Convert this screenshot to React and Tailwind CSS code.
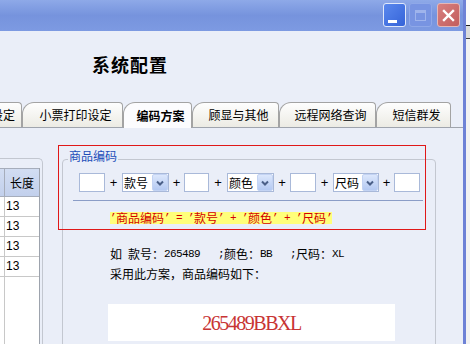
import React from 'react';

const tabs = [
    { label: '基本设定', w: 'w-[80px] -ml-[58px]', pad: 'justify-end pr-[6px]' },
    { label: '小票打印设定', w: 'w-[101px]', pad: 'justify-center pl-[6px]' },
    { label: '编码方案', w: 'w-[69px]', pad: 'justify-center pl-[6px]', active: true },
    { label: '顾显与其他', w: 'w-[87px]', pad: 'justify-center pl-[6px]' },
    { label: '远程网络查询', w: 'w-[97px]', pad: 'justify-center pl-[6px]' },
    { label: '短信群发', w: 'w-[75px]', pad: 'justify-center pl-[6px]' },
];

// ASCII runs are drawn half-width (6px), like the old bitmap font
const Mix = ({ text }) =>
    text.split(/([\u0000-\u00ff\u2019]+)/).filter(Boolean).map((s, i) =>
        /^[\u0000-\u00ff\u2019]+$/.test(s) ? (
            <span key={i} className="whitespace-pre font-['Liberation_Mono'] text-[11px] tracking-[-0.6px]">{s}</span>
        ) : (
            <span key={i}>{s}</span>
        )
    );

const Box = ({ w }) => (
    <div className={`${w} h-[19px] bg-white border border-[#a9b9d9]`} />
);

const Plus = ({ w }) => (
    <div className={`${w} text-center text-[13px] leading-[19px] font-['Liberation_Sans'] text-black`}>+</div>
);

const Select = ({ label, w }) => (
    <div className={`${w} h-[19px] bg-white border border-[#a9b9d9] flex items-center`}>
        <span className="flex-1 pl-[1px] text-[12px] leading-[17px] text-black">{label}</span>
        <div className="w-[16px] h-[17px] rounded-[2px] bg-gradient-to-b from-[#dce7fc] to-[#b4c9f2] border border-[#c3d3f3] flex items-center justify-center">
            <svg width="10" height="10" viewBox="0 0 10 10">
                <polyline points="2,3.5 5,6.5 8,3.5" fill="none" stroke="#4a5f88" strokeWidth="2" />
            </svg>
        </div>
    </div>
);

export default function App() {
    return (
        <div className="w-[470px] h-[344px] overflow-hidden relative flex bg-[#eaeef8] font-['Noto_Sans_CJK_SC',sans-serif]">
            <div className="w-[463px] flex flex-col">
                {/* title bar */}
                <div className="h-[31px] shrink-0 bg-gradient-to-b from-[#8ea9e8] via-[#7693dd] to-[#7d9ae2] flex justify-end items-start pt-[3px] pr-[3px]">
                    <div className="w-[23px] h-[24px] rounded-[3px] border border-[#dfe8fb] bg-gradient-to-br from-[#5a88ee] to-[#3563d8] relative">
                        <div className="absolute left-[4px] bottom-[3px] w-[9px] h-[3px] bg-white" />
                    </div>
                    <div className="w-[23px] h-[24px] ml-[3px] rounded-[3px] border border-[#8fa8e8] bg-[#7894e2] flex items-center justify-center">
                        <div className="w-[11px] h-[11px] border border-[#9fb4ec] border-t-[3px]" />
                    </div>
                    <div className="w-[23px] h-[24px] ml-[5px] rounded-[3px] border border-[#e3b8b8] bg-gradient-to-br from-[#d88080] to-[#c25d5d] flex items-center justify-center">
                        <svg width="13" height="13" viewBox="0 0 13 13">
                            <path d="M2 2 L11 11 M11 2 L2 11" stroke="white" strokeWidth="2.4" strokeLinecap="square" />
                        </svg>
                    </div>
                </div>

                {/* header */}
                <div className="h-[71px] shrink-0 pl-[92px] pt-[22px]">
                    <span className="text-[18px] leading-[18px] font-bold text-black tracking-[1px]">系统配置</span>
                </div>

                {/* tabs */}
                <div className="h-[26px] shrink-0 flex items-end border-b border-[#9fa4ad]">
                    {tabs.map((t) => (
                        <div
                            key={t.label}
                            className={`${t.w} ${t.pad} flex items-center text-[12px] text-black rounded-tl-[12px] rounded-tr-[4px] border border-b-0 border-[#a3a3a3] ${
                                t.active
                                    ? 'h-[26px] -mb-px bg-[#fcfcfe] font-bold'
                                    : 'h-[25px] bg-gradient-to-b from-[#fefefe] to-[#ecebe4]'
                            }`}
                        >
                            {t.label}
                        </div>
                    ))}
                </div>

                {/* content */}
                <div className="flex-1 flex">
                    <div className="w-[43px] mt-[30px] border-t border-r border-[#c3c7d0] rounded-tr-[5px] flex flex-col">
                        <div className="mt-[9px] w-[40px] flex-1 border-r border-[#9da3ad] bg-white flex flex-col text-[12px]">
                            <div className="h-[29px] flex border-y border-[#a6adbb] bg-gradient-to-b from-[#d2ddf2] to-[#c2d0ec]">
                                <div className="w-[5px] border-r border-[#a6adbb]" />
                                <div className="flex-1 flex items-center justify-center text-black">长度</div>
                            </div>
                            {[0, 1, 2, 3].map((i) => (
                                <div key={i} className="h-[20px] flex border-b border-[#c8c8c8]">
                                    <div className="w-[5px] border-r border-[#c8c8c8]" />
                                    <div className="flex-1 pl-[1px] leading-[19px] font-['Liberation_Sans'] text-black">13</div>
                                </div>
                            ))}
                            <div className="flex-1 flex">
                                <div className="w-[5px] border-r border-[#c8c8c8]" />
                            </div>
                        </div>
                    </div>

                    <div className="ml-[19px] mt-[31px] w-[374px] h-[220px] relative border border-[#c3c7d0] rounded-[4px] pl-[16px] pt-[13px] flex flex-col items-start">
                        <div className="absolute left-[5px] -top-[10px] px-[1px] bg-[#eaeef8] text-[12px] leading-[12px] text-[#1d4db8]">商品编码</div>
                        <div className="flex items-center">
                            <Box w="w-[26px]" />
                            <Plus w="w-[17px]" />
                            <Select label="款号" w="w-[47px]" />
                            <Plus w="w-[15px]" />
                            <Box w="w-[25px]" />
                            <Plus w="w-[18px]" />
                            <Select label="颜色" w="w-[47px]" />
                            <Plus w="w-[16px]" />
                            <Box w="w-[26px]" />
                            <Plus w="w-[17px]" />
                            <Select label="尺码" w="w-[46px]" />
                            <Plus w="w-[15px]" />
                            <Box w="w-[26px]" />
                        </div>
                        <div className="mt-[8px] -ml-[6px] w-[350px] h-px bg-[#8b9dc7]" />
                        <div className="mt-[11px] ml-[31px] h-[12px] flex items-center bg-[#ffff7a] text-[#d40000] text-[12px] leading-[12px]">
                            <Mix text="’商品编码’ = ’款号’ + ’颜色’ + ’尺码’" />
                        </div>
                        <div className="mt-[24px] ml-[31px] h-[12px] flex items-center text-[12px] leading-[12px] text-black">
                            <Mix text="如 款号：265489   ;颜色：BB   ;尺码：XL" />
                        </div>
                        <div className="mt-[8px] ml-[31px] h-[12px] flex items-center text-[12px] leading-[12px] text-black">采用此方案，商品编码如下：</div>
                        <div className="mt-[24px] ml-[29px] w-[287px] h-[37px] bg-white flex items-center justify-center">
                            <span className="font-['Liberation_Serif',serif] text-[20px] leading-[20px] tracking-[-1.5px] text-[#c83434]">265489BBXL</span>
                        </div>
                    </div>
                </div>
            </div>

            {/* window frame edge */}
            <div className="w-[3px] bg-[#6e82d6]" />
            <div className="w-[4px] flex flex-col bg-[#f2f2f2]">
                <div className="h-[25px] bg-[#fafafa]" />
                <div className="h-px bg-[#202020]" />
                <div className="h-[12px] bg-[#dcdcdc]" />
                <div className="h-px bg-[#404040]" />
            </div>

            {/* red annotation frame */}
            <div className="absolute left-[58px] top-[145px] w-[368px] h-[85px] shadow-[inset_0_0_0_1px_#e01818] pointer-events-none" />
        </div>
    );
}
